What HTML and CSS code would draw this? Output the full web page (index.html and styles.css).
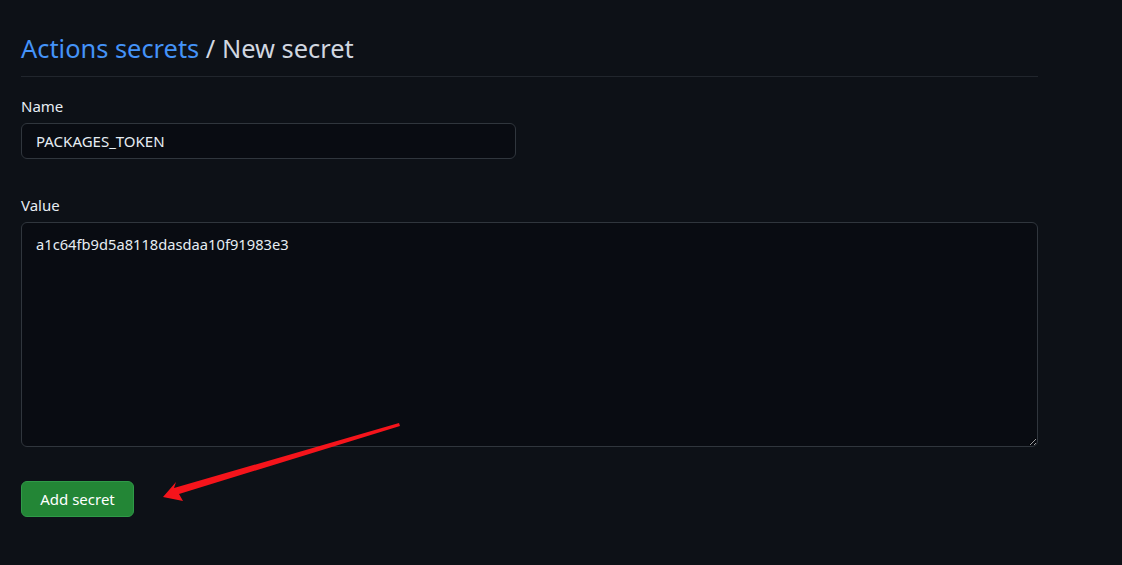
FILE: index.html
```html
<!DOCTYPE html>
<html lang="en">
<head>
<meta charset="utf-8">
<title>New secret</title>
<link rel="stylesheet" href="styles.css">
</head>
<body>
<main class="page">
  <h1 class="title"><a class="crumb" href="#">Actions secrets</a> / New secret</h1>
  <form class="form">
    <div class="field">
      <label class="label" for="name">Name</label>
      <input class="input name-input" id="name" type="text" value="PACKAGES_TOKEN">
    </div>
    <div class="field">
      <label class="label" for="value">Value</label>
      <textarea class="input value-input" id="value">a1c64fb9d5a8118dasdaa10f91983e3</textarea>
    </div>
    <div class="actions">
      <button class="btn" type="button">Add secret</button>
    </div>
  </form>
</main>
<svg class="arrow" width="1122" height="565" viewBox="0 0 1122 565" aria-hidden="true">
  <polygon points="163,497 176,482 174,488 399,423 400,426 179,494 183,501" fill="#f5141b"/>
</svg>
</body>
</html>
```
FILE: styles.css
```css
html, body {
  margin: 0;
  padding: 0;
  background: #0d1117;
  color-scheme: dark;
}
body {
  font-family: "Segoe UI", "Noto Sans", "Open Sans", "Liberation Sans", sans-serif;
  color: #e6edf3;
  font-size: 15px;
  line-height: 1.5;
}
.page {
  width: 1017px;
  padding: 30px 0 0 21px;
}
.title {
  margin: 0;
  font-size: 25.4px;
  font-weight: 400;
  line-height: 36px;
  padding-bottom: 10px;
  border-bottom: 1px solid #21262d;
  color: #d1d7e0;
}
.crumb {
  color: #4493f8;
  text-decoration: none;
}
.form {
  display: flex;
  flex-direction: column;
  padding-top: 19px;
  gap: 36px;
}
.field {
  display: flex;
  flex-direction: column;
  gap: 6px;
}
.label {
  font-size: 15px;
  line-height: 21px;
  color: #e6edf3;
}
.input {
  box-sizing: border-box;
  background: #090c12;
  border: 1px solid #30363d;
  border-radius: 6px;
  color: #e6edf3;
  font-family: inherit;
  font-size: 15px;
  line-height: 20px;
  padding: 7px 14px;
  outline: none;
}
.name-input {
  width: 495px;
  height: 36px;
}
.value-input {
  width: 1017px;
  height: 225px;
  padding: 11px 14px;
  font-size: 14.7px;
  resize: vertical;
  display: block;
}
.actions {
  display: flex;
  margin-top: -2px;
}
.btn {
  box-sizing: border-box;
  width: 113px;
  height: 36px;
  background: #238636;
  border: 1px solid #2f9a48;
  border-radius: 6px;
  color: #ffffff;
  font-family: inherit;
  font-size: 15px;
  font-weight: 400;
  padding: 0 16px;
}
.arrow {
  position: absolute;
  left: 0;
  top: 0;
  pointer-events: none;
}
```
